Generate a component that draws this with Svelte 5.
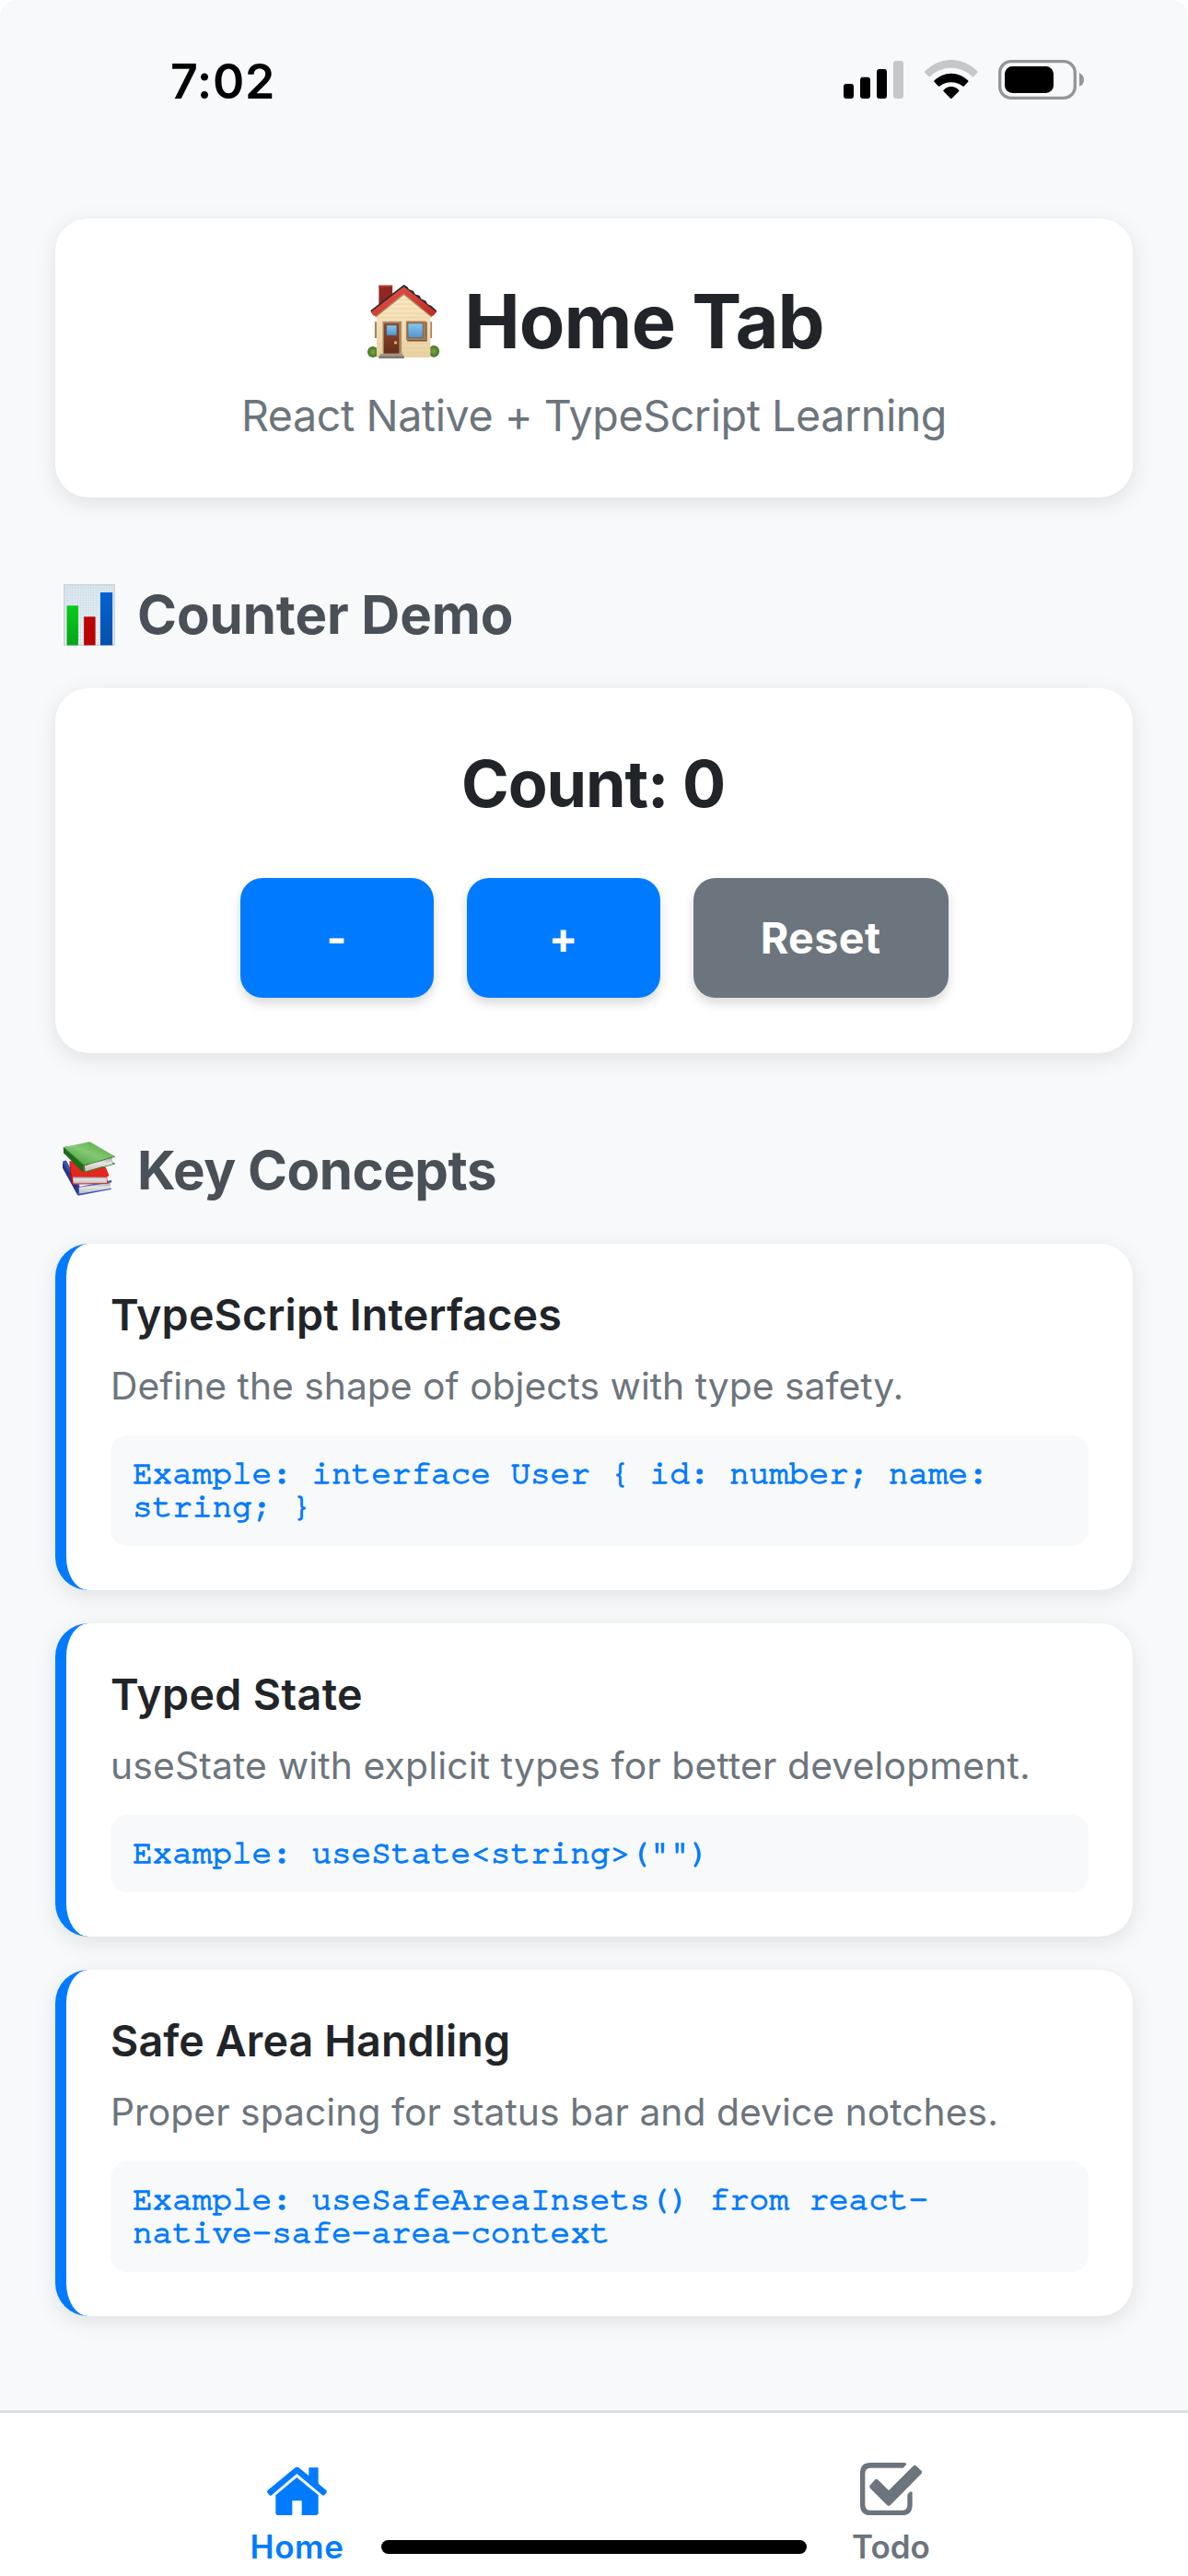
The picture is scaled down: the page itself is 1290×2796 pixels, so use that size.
<script>
  let count = $state(0);

  const concepts = [
    {
      title: 'TypeScript Interfaces',
      text: 'Define the shape of objects with type safety.',
      code: 'interface User { id: number; name: string; }',
      fit: 'fit-a'
    },
    {
      title: 'Typed State',
      text: 'useState with explicit types for better development.',
      code: 'useState<string>("")',
      fit: 'fit-b'
    },
    {
      title: 'Safe Area Handling',
      text: 'Proper spacing for status bar and device notches.',
      code: 'useSafeAreaInsets() from react-native-safe-area-context',
      fit: 'fit-c'
    }
  ];
</script>

<div class="phone">
  <div class="screen">
    <div class="status">
      <span class="time">7:02</span>
      <div class="indicators">
        <svg class="signal" viewBox="108 75 195 129">
          <rect x="108" y="153" width="33" height="48" rx="9" />
          <rect x="162" y="131" width="33" height="70" rx="9" />
          <rect x="216" y="105" width="33" height="96" rx="9" />
          <rect x="270" y="78" width="33" height="123" rx="9" fill="#c6c7c9" />
        </svg>
        <svg class="wifi" viewBox="371 75 173 129">
          <path fill="#c6c7c9" d="M372 112A117 117 0 0 1 543 112Q545 115 543 117L531 129Q528 131 525 128A99 99 0 0 0 390 128Q387 131 384 129L372 117Q370 115 372 112Z" />
          <path d="M403 142A77 77 0 0 1 512 142Q515 145 512 147L500 160Q497 163 494 160A60 60 0 0 0 421 160Q418 163 415 160L403 147Q400 145 403 142Z" />
          <path d="M433 173A33 33 0 0 1 482 173Q485 175 482 178L460 200Q457.500 202 455 200L433 178Q430 175 433 173Z" />
        </svg>
        <svg class="battery" viewBox="612 75 280 129">
          <rect x="617" y="80" width="245" height="119" rx="37" fill="none" stroke="#949597" stroke-width="10" />
          <rect x="633" y="96" width="159" height="87" rx="25" />
          <path fill="#949597" d="M876 118Q891 124 891 140Q891 156 876 161Z" />
        </svg>
      </div>
    </div>

    <main>
      <header class="card hero">
        <h1>
          <svg class="house" viewBox="55 55 227 239" preserveAspectRatio="none" aria-hidden="true">
            <defs>
              <linearGradient id="wall" x1="0" y1="0" x2="0" y2="1">
                <stop offset="0" stop-color="#fde9c4" /><stop offset="1" stop-color="#ead2a3" />
              </linearGradient>
              <linearGradient id="roof" x1="0" y1="0" x2="1" y2="1">
                <stop offset="0" stop-color="#ea5345" /><stop offset="1" stop-color="#c02a25" />
              </linearGradient>
              <linearGradient id="glass" x1="0" y1="0" x2="0" y2="1">
                <stop offset="0" stop-color="#86c8ee" /><stop offset="1" stop-color="#5295cf" />
              </linearGradient>
              <linearGradient id="door" x1="0" y1="0" x2="0" y2="1">
                <stop offset="0" stop-color="#8c4a33" /><stop offset="1" stop-color="#652c1c" />
              </linearGradient>
              <radialGradient id="bush">
                <stop offset="0" stop-color="#7fa83c" /><stop offset="1" stop-color="#41712a" />
              </radialGradient>
            </defs>
            <path fill="#8f2822" d="M91 57H134V100L91 125Z" />
            <path fill="#b8403a" d="M91 57H134V62H91Z" />
            <ellipse cx="72" cy="273" rx="17" ry="18" fill="url(#bush)" />
            <ellipse cx="265" cy="271" rx="17" ry="19" fill="url(#bush)" />
            <path fill="#a3825f" d="M78 175H85V228H78ZM252 175H259V228H252Z" />
            <path fill="url(#wall)" d="M84 148L170 76L254 148V291H84Z" />
            <path stroke="#dcc39a" stroke-width="1.500" d="M143 104H198M127 118H213M110 133H230M93 148H247M84 162H254M84 246H104M162 246H254M84 260H104M162 260H254M84 274H104M162 274H254" />
            <path fill="none" stroke="#a68662" stroke-width="5" d="M80 159L170 85L259 159" />
            <path fill="#22292b" d="M65 139L170 55L181 62L186 70L200 75L206 86L219 90L225 101L239 107L245 118L257 124L273 139V146L170 67L67 146Z" />
            <path fill="url(#roof)" d="M66 144L170 61L273 144L263 156H256L170 83L82 156H74Z" />
            <path fill="#aa8865" d="M103 174H163V278H103Z" />
            <path fill="url(#door)" d="M107 180H155V278H107Z" />
            <path fill="url(#glass)" stroke="#73402c" stroke-width="2" d="M115 186H148V220H115Z" />
            <circle cx="144" cy="243" r="5" fill="#e9bb46" />
            <path fill="#6d4b35" d="M178 177H243V239H181Z" />
            <path fill="#a57d58" d="M177 173H240V235H177Z" />
            <path fill="url(#glass)" stroke="#745139" stroke-width="2" d="M183 180H230V227H183Z" />
            <path fill="#9c9487" d="M96 279H166L168 286H94Z" />
            <path fill="#7d766c" d="M91 286H171V294H91Z" />
          </svg>
          <span>Home Tab</span>
        </h1>
        <p>React Native + TypeScript Learning</p>
      </header>

      <h2>
        <svg class="chart" viewBox="81 69 157 201" preserveAspectRatio="none" aria-hidden="true">
          <defs>
            <linearGradient id="paper" x1="0" y1="0" x2="0" y2="1">
              <stop offset="0" stop-color="#dfe8ee" /><stop offset="1" stop-color="#f3f4f5" />
            </linearGradient>
            <pattern id="grid" width="8" height="8" patternUnits="userSpaceOnUse" x="83" y="73">
              <path d="M0 1H8M1 0V8" stroke="#c6dcea" stroke-width="2" />
            </pattern>
            <linearGradient id="green" x1="0" y1="0" x2="0" y2="1">
              <stop offset="0" stop-color="#05cc1b" /><stop offset="1" stop-color="#06a51a" />
            </linearGradient>
            <linearGradient id="blue" x1="0" y1="0" x2="0" y2="1">
              <stop offset="0" stop-color="#0761d2" /><stop offset="1" stop-color="#0450aa" />
            </linearGradient>
          </defs>
          <rect x="81" y="69" width="157" height="201" fill="url(#paper)" />
          <rect x="81" y="69" width="157" height="201" fill="url(#grid)" />
          <rect x="83" y="71" width="153" height="197" fill="none" stroke="#cfd4d9" stroke-width="4" />
          <rect x="91" y="139" width="35" height="129" fill="url(#green)" />
          <rect x="143" y="175" width="35" height="93" fill="#b90303" />
          <rect x="193" y="96" width="37" height="172" fill="url(#blue)" />
        </svg>
        <span>Counter Demo</span>
      </h2>

      <section class="card counter">
        <div class="count">Count: {count}</div>
        <div class="buttons">
          <button onclick={() => (count -= 1)}>-</button>
          <button onclick={() => (count += 1)}>+</button>
          <button class="reset" onclick={() => (count = 0)}>Reset</button>
        </div>
      </section>

      <h2 class="concepts-title">
        <svg class="books" viewBox="79 84 160 178" preserveAspectRatio="none" aria-hidden="true">
          <defs>
            <linearGradient id="cover" x1="0" y1="1" x2="1" y2="0">
              <stop offset="0" stop-color="#3c9230" /><stop offset="0.500" stop-color="#84c873" /><stop offset="1" stop-color="#4da03c" />
            </linearGradient>
            <linearGradient id="pages" x1="0" y1="0" x2="0" y2="1">
              <stop offset="0" stop-color="#a4a4a6" /><stop offset="0.400" stop-color="#e4e4e4" /><stop offset="1" stop-color="#bcbcbd" />
            </linearGradient>
          </defs>
          <path fill="#3654b5" d="M80 148L90 146L132 232L228 211L229 216L223 220V236L229 240L126 261L79 170Z" />
          <path fill="url(#pages)" d="M129 234L222 219L224 238L130 255Z" />
          <path fill="#24378c" d="M80 152L126 232L124 258L79 170Z" />
          <path fill="#e3271f" d="M100 147L130 150L210 168L221 195L214 201L218 222L110 225L103 196Z" />
          <path fill="#a91717" d="M100 147L107 195L112 224L102 203Z" />
          <path fill="url(#pages)" d="M110 200L213 201L214 220L112 221Z" />
          <path fill="#1c6b1c" d="M81 104L90 100L142 160L146 184L138 182L82 122Z" />
          <path fill="url(#pages)" d="M146 163L229 136L232 156L148 183Z" />
          <path fill="url(#cover)" d="M82 103L162 85L238 132L144 161Z" />
          <path fill="none" stroke="#2e8326" stroke-width="3" d="M82 104L144 162L238 133M144 162Q140 176 146 184L238 157L230 153" />
        </svg>
        <span>Key Concepts</span>
      </h2>

      <div class="concepts">
        {#each concepts as concept}
          <article class="card concept {concept.fit}">
            <h3>{concept.title}</h3>
            <p>{concept.text}</p>
            <code>Example: {concept.code}</code>
          </article>
        {/each}
      </div>
    </main>
  </div>

  <nav>
    <a class="active" href="#home">
      <svg viewBox="117 99 201 171" fill="currentColor" aria-hidden="true">
        <path d="M212 115Q217 111 223 115L256 142V118Q256 115 259 115H284Q287 115 287 118V167L313 189Q317 193 313 197L307 204Q304 208 300 205L217 135L135 205Q131 208 128 205L122 198Q118 193 122 189Z" />
        <path d="M217 147L287 205V262Q287 270 279 270H233V223H202V270H156Q148 270 148 262V205Z" />
      </svg>
      <span>Home</span>
    </a>
    <a href="#todo">
      <svg viewBox="102 99 201 171" aria-hidden="true">
        <path fill="currentColor" d="M242 116H136Q118 116 118 134V236Q118 254 136 254H238Q256 254 256 236V206Q256 202 259 199L265 194Q272 190 272 198V236Q272 270 238 270H136Q102 270 102 236V133Q102 99 136 99H245Q255 100 252 106Z" />
        <path fill="currentColor" stroke="currentColor" stroke-width="16" stroke-linejoin="round" d="M141 177L155 161L195 201L280 116L295 130L195 231Z" />
      </svg>
      <span>Todo</span>
    </a>
    <div class="home-indicator"></div>
  </nav>
</div>

<style>
  :global(body) {
    margin: 0;
    background: #fff;
  }

  .phone {
    display: flex;
    flex-direction: column;
    width: 1290px;
    height: 2796px;
    overflow: hidden;
    background: #fff;
    font-family: Inter, 'Liberation Sans', sans-serif;
    color: #212529;
  }

  .screen {
    flex: 1;
    min-height: 0;
    background: #f8f9fb;
    border-radius: 18px 18px 0 0;
  }

  svg {
    display: block;
    flex: none;
  }

  .status {
    box-sizing: border-box;
    display: flex;
    align-items: center;
    justify-content: space-between;
    height: 173px;
    padding: 0 112.500px 0 185px;
    color: #000;
  }

  .time {
    padding-top: 4px;
    font-size: 52px;
    font-weight: 600;
    line-height: 60px;
    letter-spacing: 0.6px;
  }

  .indicators {
    display: flex;
    align-items: center;
    gap: 22.700px;
  }

  .signal { width: 65px; height: 43px; }
  .wifi { width: 57.700px; height: 43px; }
  .battery { width: 93.300px; height: 43px; }

  main {
    padding: 64px 60px 0;
  }

  h1, h2, h3, p {
    margin: 0;
  }

  .card {
    box-sizing: border-box;
    border-radius: 36px;
    background: #fff;
    box-shadow: 0 6px 24px rgba(0, 0, 0, 0.1);
  }

  .hero {
    display: flex;
    flex-direction: column;
    align-items: center;
    gap: 23px;
    height: 303px;
    padding-top: 62px;
  }

  h1 {
    display: flex;
    align-items: center;
    gap: 27px;
    padding-left: 4px;
    font-size: 81px;
    font-weight: 700;
    line-height: 100px;
    letter-spacing: -0.9px;
  }

  .house { width: 78px; height: 80px; }

  .hero p {
    color: #6c757d;
    font-size: 46.600px;
    line-height: 58px;
    letter-spacing: -0.43px;
  }

  h2 {
    display: flex;
    align-items: center;
    gap: 24px;
    margin: 91px 0 44px;
    padding-left: 9px;
    color: #495057;
    font-size: 58.200px;
    font-weight: 700;
    line-height: 72px;
    letter-spacing: -0.1px;
  }

  .chart { width: 56px; height: 67px; }
  .books { width: 57px; height: 59px; margin-bottom: 3px; }

  .concepts-title {
    padding-left: 8px;
    letter-spacing: -0.5px;
  }

  .counter {
    display: flex;
    flex-direction: column;
    align-items: center;
    gap: 59px;
    height: 396px;
    padding-top: 61px;
  }

  .count {
    padding-right: 2px;
    font-size: 70px;
    font-weight: 700;
    line-height: 86px;
    letter-spacing: -1.07px;
  }

  .buttons {
    display: flex;
    gap: 36px;
  }

  button {
    width: 210px;
    height: 130px;
    padding: 0;
    border: 0;
    border-radius: 24px;
    background: #007bff;
    box-shadow: 0 6px 12px rgba(0, 0, 0, 0.15);
    color: #fff;
    font-family: inherit;
    font-size: 46.600px;
    font-weight: 700;
    line-height: 130px;
  }

  .reset {
    width: 277px;
    background: #6c757d;
    letter-spacing: 0.4px;
  }

  .concepts {
    display: flex;
    flex-direction: column;
    gap: 36px;
  }

  .concept {
    padding: 48px;
    border-left: 12px solid #007bff;
  }

  h3 {
    font-size: 46.600px;
    font-weight: 600;
    line-height: 58px;
    letter-spacing: 0.18px;
  }

  .concept p {
    margin: 18px 0 24px;
    color: #6c757d;
    font-size: 40.800px;
    line-height: 60px;
    letter-spacing: 0;
    white-space: nowrap;
  }

  .fit-b h3 { letter-spacing: 0.36px; }
  .fit-b p { letter-spacing: 0.15px; }
  .fit-c h3 { letter-spacing: 0.1px; }
  .fit-c p { letter-spacing: 0.04px; }

  code {
    display: block;
    padding: 22px 24px 26px;
    border-radius: 18px;
    background: #f8f9fb;
    color: #007bff;
    font-family: 'TeX Gyre Cursor', 'Courier Prime', 'Liberation Mono', monospace;
    font-size: 36px;
    line-height: 36px;
    -webkit-text-stroke: 1.300px #007bff;
  }

  nav {
    position: relative;
    box-sizing: border-box;
    display: flex;
    height: 180px;
    border-top: 3px solid #dedede;
    background: #fff;
  }

  nav a {
    flex: 1;
    display: flex;
    flex-direction: column;
    align-items: center;
    gap: 13px;
    padding-top: 54px;
    color: #6c757d;
    font-size: 35px;
    font-weight: 600;
    line-height: 42px;
    text-decoration: none;
  }

  nav .active {
    color: #007bff;
    letter-spacing: 0.6px;
  }

  nav svg {
    width: 67px;
    height: 57px;
  }

  .home-indicator {
    position: absolute;
    bottom: 24px;
    left: 414px;
    width: 462px;
    height: 15px;
    border-radius: 8px;
    background: #000;
  }
</style>
